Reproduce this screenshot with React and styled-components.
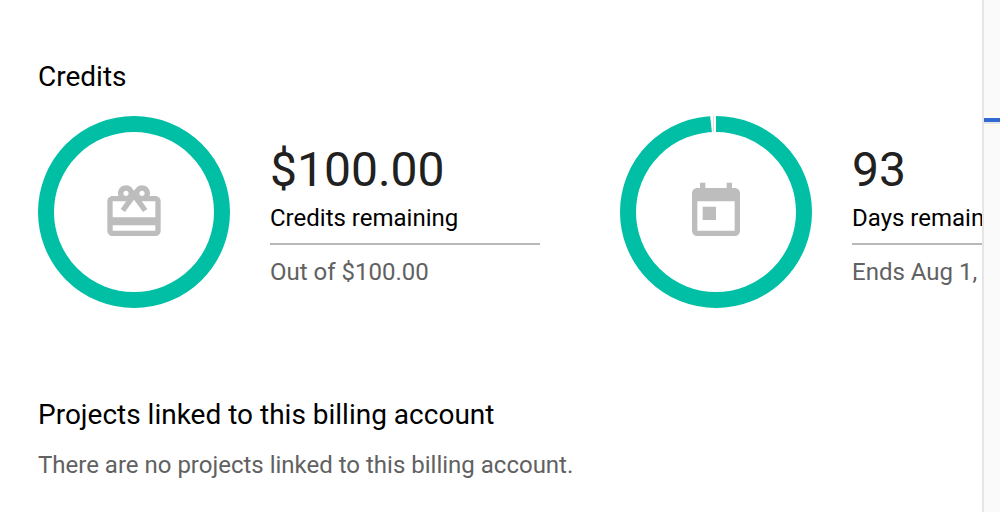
import React from 'react';
import styled, { createGlobalStyle } from 'styled-components';

const GlobalStyle = createGlobalStyle`
  * { box-sizing: border-box; }
  body { margin: 0; background: #fff; font-family: Roboto, "Liberation Sans", sans-serif; color: #000; }
`;

const Page = styled.div`
  display: grid;
  grid-template-columns: minmax(0, 1fr) 18px;
  min-height: 100vh;
`;

const Main = styled.main`
  overflow: hidden;
  padding: 61px 0 24px 38px;
`;

const SidePanel = styled.aside`
  background: #fafafa;
  border-left: 2px solid #e5e5e5;
  padding-top: 118px;
`;

const ActiveBar = styled.div`
  height: 6px;
  background: #3367d6;
  border-bottom: 2px solid #e5e5e5;
`;

const Heading = styled.h2`
  margin: 0;
  font-size: 28px;
  line-height: 32px;
  font-weight: 400;
`;

const CreditRow = styled.div`
  display: flex;
  gap: 80px;
  margin: 23px 0 91px;
`;

const Metric = styled.section`
  display: flex;
  flex: none;
  gap: 40px;
`;

const Dial = styled.svg`
  display: block;
  width: 192px;
  height: 192px;
`;

const Details = styled.div`
  width: 270px;
  padding-top: 24px;
  white-space: nowrap;
`;

const Amount = styled.div`
  font-size: 48px;
  line-height: 60px;
  color: #212121;
`;

const Label = styled.div`
  padding-bottom: 7px;
  border-bottom: 2px solid #b8b8b8;
  font-size: 24px;
  line-height: 36px;
`;

const Note = styled.p`
  margin: ${(p) => p.$gap}px 0 0;
  font-size: 24px;
  line-height: 32px;
  color: #616161;
`;

const GIFT = 'M20 6h-2.18c.11-.31.18-.65.18-1 0-1.66-1.34-3-3-3-1.05 0-1.96.54-2.5 1.35l-.5.67-.5-.68C10.96 2.54 10.05 2 9 2 7.34 2 6 3.34 6 5c0 .35.07.69.18 1H4c-1.11 0-1.99.89-1.99 2L2 19c0 1.11.89 2 2 2h16c1.11 0 2-.89 2-2V8c0-1.11-.89-2-2-2zm-5-2c.55 0 1 .45 1 1s-.45 1-1 1-1-.45-1-1 .45-1 1-1zM9 4c.55 0 1 .45 1 1s-.45 1-1 1-1-.45-1-1 .45-1 1-1zm11 15H4v-2h16v2zm0-5H4V8h5.08L7 10.83 8.62 12 11 8.76l1-1.36 1 1.36L15.38 12 17 10.83 14.92 8H20v6z';
const CALENDAR = 'M19 3h-1V1h-2v2H8V1H6v2H5c-1.11 0-1.99.9-1.99 2L3 19c0 1.1.89 2 2 2h14c1.1 0 2-.9 2-2V5c0-1.1-.9-2-2-2zm0 16H5V8h14v11zM7 10h5v5H7z';

function CreditMetric({ icon, amount, label, note, gap }) {
  return (
    <Metric>
      <Dial viewBox="0 0 192 192" aria-hidden="true">
        <circle cx="96" cy="96" r="88" fill="none" stroke="#00bfa5" strokeWidth="16" />
        {gap && <path d="M90 -1h6v18h-4z" fill="#fff" />}
        {gap && <path d="M93 0h1v16h-1z" fill="#e0e0e0" />}
        <path d={icon} transform="translate(64 64) scale(2.667)" fill="#bdbdbd" />
      </Dial>
      <Details>
        <Amount>{amount}</Amount>
        <Label>{label}</Label>
        <Note $gap={11}>{note}</Note>
      </Details>
    </Metric>
  );
}

export default function App() {
  return (
    <>
      <GlobalStyle />
      <Page>
        <Main>
          <Heading>Credits</Heading>
          <CreditRow>
            <CreditMetric icon={GIFT} amount="$100.00" label="Credits remaining" note="Out of $100.00" />
            <CreditMetric icon={CALENDAR} amount="93" label="Days remaining" note="Ends Aug 1, 2018" gap />
          </CreditRow>
          <Heading>Projects linked to this billing account</Heading>
          <Note $gap={18}>There are no projects linked to this billing account.</Note>
        </Main>
        <SidePanel><ActiveBar /></SidePanel>
      </Page>
    </>
  );
}
